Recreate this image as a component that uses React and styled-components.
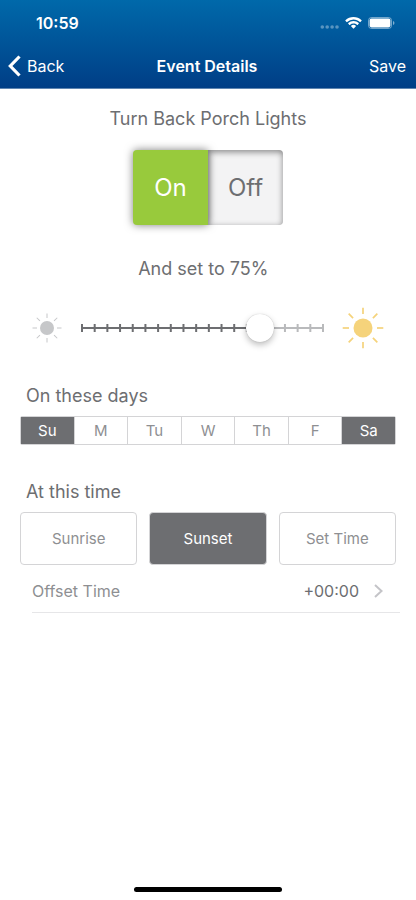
import { useState } from "react";
import styled, { createGlobalStyle } from "styled-components";

const DAYS = ["Su", "M", "Tu", "W", "Th", "F", "Sa"];
const TIMES = ["Sunrise", "Sunset", "Set Time"];
const RAYS = [0, 45, 90, 135, 180, 225, 270, 315];
const MIN = 5;
const STEP = 5;
const TICKS = Array.from({ length: 20 }, (_, i) => MIN + i * STEP);

const position = (value) => `${((value - MIN) / (100 - MIN)) * 100}%`;

const Sun = ({ size, core, inner, outer, stroke, color }) => (
    <svg width={size} height={size} viewBox={`${-size / 2} ${-size / 2} ${size} ${size}`} aria-hidden="true">
        <circle r={core} fill={color}/>
        {RAYS.map((angle) => (
            <line key={angle} x1={inner} x2={outer} y1="0" y2="0" stroke={color} strokeWidth={stroke} transform={`rotate(${angle})`}/>
        ))}
    </svg>
)

const App = () => {
    const [on, setOn] = useState(true);
    const [level, setLevel] = useState(75);
    const [days, setDays] = useState(["Su", "Sa"]);
    const [time, setTime] = useState("Sunset");

    // add or remove a day from the schedule
    const toggleDay = (day) => {
        setDays(days.includes(day) ? days.filter((d) => d !== day) : [...days, day]);
    }

    return (
        <>
        <GlobalStyle/>
        <Screen>
            <TopBar>
                <StatusBar>
                    <Clock>10:59</Clock>
                    <StatusIcons>
                        <svg width="20" height="4" viewBox="0 0 20 4" fill="#fff" fillOpacity="0.35" aria-hidden="true">
                            <circle cx="2.3" cy="2" r="1.8"/>
                            <circle cx="7.2" cy="2" r="1.8"/>
                            <circle cx="12.1" cy="2" r="1.8"/>
                            <circle cx="17" cy="2" r="1.8"/>
                        </svg>
                        <Wifi width="17" height="12" viewBox="0 0 17 12" fill="#fff" aria-hidden="true">
                            <path d="M8.5 2.5c2.4 0 4.7.9 6.4 2.6.1.1.3.1.5 0l1.2-1.3c.1-.1.1-.4 0-.5a11.7 11.7 0 0 0-16.2 0c-.1.1-.1.4 0 .5l1.2 1.3c.2.1.4.1.5 0A9.3 9.3 0 0 1 8.5 2.500z"/>
                            <path d="M8.5 6.500c1.3 0 2.6.5 3.6 1.4.1.1.3.1.5 0l1.2-1.3c.2-.1.2-.4 0-.5a7.8 7.8 0 0 0-10.6 0c-.2.1-.2.4 0 .5l1.2 1.3c.2.1.4.1.5 0a5.3 5.3 0 0 1 3.6-1.4z"/>
                            <path d="M10.9 9.3c.1-.1.1-.4 0-.5a3.7 3.7 0 0 0-4.8 0c-.1.1-.1.4 0 .5l2.1 2.2c.2.2.4.2.6 0z"/>
                        </Wifi>
                        <svg width="27" height="12" viewBox="0 0 27 12" aria-hidden="true">
                            <rect x="0.5" y="0.5" width="23" height="11" rx="3" fill="none" stroke="#fff" strokeOpacity="0.45"/>
                            <rect x="1.6" y="1.6" width="20.8" height="8.8" rx="1.8" fill="#fff"/>
                            <path d="M25 4v4a2.1 2.1 0 0 0 0-4z" fill="#fff" fillOpacity="0.5"/>
                        </svg>
                    </StatusIcons>
                </StatusBar>
                <NavBar>
                    <NavButton>
                        <svg width="13" height="22" viewBox="0 0 13 22" fill="none" stroke="#fff" strokeWidth="3.2" aria-hidden="true">
                            <path d="M11.5 1.5 2.3 11l9.2 9.5"/>
                        </svg>
                        Back
                    </NavButton>
                    <NavTitle>Event Details</NavTitle>
                    <NavButton $end>Save</NavButton>
                </NavBar>
            </TopBar>
            <Content>
                <Heading>Turn Back Porch Lights</Heading>
                <PowerSwitch>
                    <OnButton $active={on} aria-pressed={on} onClick={() => setOn(true)}>On</OnButton>
                    <OffButton $active={!on} aria-pressed={!on} onClick={() => setOn(false)}>Off</OffButton>
                </PowerSwitch>
                <Heading as="label" htmlFor="level">And set to <Level>{level}%</Level></Heading>
                <SliderRow>
                    <Sun size={32} core={7} inner={10} outer={14.5} stroke={1} color="#c6c7c9"/>
                    <Slider>
                        <Scale aria-hidden="true">
                            <line x1={position(level)} x2="100%" y1="14" y2="14" stroke="#b9babc"/>
                            <line x1="0" x2={position(level)} y1="14" y2="14" stroke="#6d6e71"/>
                            {TICKS.map((tick) => (
                                <line key={tick} x1={position(tick)} x2={position(tick)} y1="10" y2="18" stroke={tick <= level ? "#6d6e71" : "#b9babc"}/>
                            ))}
                        </Scale>
                        <Range id="level" type="range" min={MIN} max="100" step={STEP} value={level} onChange={(e) => setLevel(Number(e.target.value))}/>
                    </Slider>
                    <Sun size={42} core={9.5} inner={14} outer={20.3} stroke={1.7} color="#f5d37b"/>
                </SliderRow>
                <SectionTitle>On these days</SectionTitle>
                <Days>
                    {DAYS.map((day) => (
                        <DayButton key={day} $active={days.includes(day)} aria-pressed={days.includes(day)} onClick={() => toggleDay(day)}>{day}</DayButton>
                    ))}
                </Days>
                <SectionTitle>At this time</SectionTitle>
                <Times>
                    {TIMES.map((name) => (
                        <TimeButton key={name} $active={name === time} aria-pressed={name === time} onClick={() => setTime(name)}>{name}</TimeButton>
                    ))}
                </Times>
                <OffsetRow>
                    <span>Offset Time</span>
                    <OffsetValue>
                        +00:00
                        <svg width="9" height="14" viewBox="0 0 9 14" fill="none" stroke="#c4c4c8" strokeWidth="2" aria-hidden="true">
                            <path d="m1 1 6.5 6L1 13"/>
                        </svg>
                    </OffsetValue>
                </OffsetRow>
            </Content>
            <HomeIndicator/>
        </Screen>
        </>
    )
}

export default App;

// Styled Components
const GlobalStyle = createGlobalStyle`
    *, *::before, *::after {
        box-sizing: border-box;
    }
    body {
        margin: 0;
        background-color: #fff;
        font-family: "Inter", "Liberation Sans", sans-serif;
        color: #6d6e71;
    }
    button {
        margin: 0;
        padding: 0;
        border: none;
        background: none;
        font: inherit;
        color: inherit;
        cursor: pointer;
    }
    svg {
        flex-shrink: 0;
    }
`;

const Screen = styled.div`
    display: flex;
    flex-direction: column;
    min-height: 100vh;
`;

const TopBar = styled.header`
    display: flex;
    flex-direction: column;
    border-bottom: 1px solid #5f85b1;
    background: linear-gradient(#0069aa, #003e86);
    color: #fff;
`;

const StatusBar = styled.div`
    display: flex;
    align-items: center;
    justify-content: space-between;
    height: 44px;
    padding: 2px 21px 0 36px;
`;

const Clock = styled.span`
    font-size: 16px;
    font-weight: 600;
`;

const StatusIcons = styled.div`
    display: flex;
    align-items: center;
    gap: 5px;

    svg:first-child {
        margin-top: 8px;
    }
`;

const Wifi = styled.svg`
    margin-right: 1px;
`;

const NavBar = styled.nav`
    display: grid;
    grid-template-columns: 1fr auto 1fr;
    align-items: center;
    height: 44px;
    padding: 0 10px 0 8px;
`;

const NavButton = styled.button`
    display: flex;
    align-items: center;
    justify-self: ${(props) => (props.$end ? "end" : "start")};
    gap: 6px;
    font-size: 16px;
`;

const NavTitle = styled.h1`
    margin: 0;
    font-size: 16px;
    font-weight: 600;
`;

const Content = styled.main`
    display: flex;
    flex-direction: column;
    flex: 1;
    padding: 18px 20px 0;
`;

const Heading = styled.h2`
    margin: 0;
    font-size: 18px;
    font-weight: 400;
    line-height: 24px;
    text-align: center;
`;

// wide enough for three digits, so the label stays put while sliding
const Level = styled.span`
    display: inline-block;
    min-width: 48px;
    text-align: left;
`;

const PowerSwitch = styled.div`
    display: flex;
    align-self: center;
    margin: 19px 0 32px;
`;

const PowerButton = styled.button`
    width: 75px;
    height: 75px;
    font-size: 24px;
    color: ${(props) => (props.$active ? "#fff" : "#6d6e71")};
    background-color: ${(props) => (props.$active ? "#98ca3c" : "#f3f3f4")};
    box-shadow: ${(props) => (props.$active ? "0 0 8px rgba(0, 0, 0, 0.5)" : "inset 0 2px 6px rgba(0, 0, 0, 0.45)")};
    z-index: ${(props) => (props.$active ? 1 : 0)};
`;

const OnButton = styled(PowerButton)`
    border-radius: 4px 0 0 4px;
`;

const OffButton = styled(PowerButton)`
    border-radius: 0 4px 4px 0;
`;

const SliderRow = styled.div`
    display: flex;
    align-items: center;
    gap: 5px;
    margin: 26px 0 35px;
    padding: 0 12px 0 11px;
`;

const Slider = styled.div`
    display: grid;
    flex: 1;
    height: 28px;

    > * {
        grid-area: 1 / 1;
    }
`;

const Scale = styled.svg`
    width: calc(100% - 28px);
    height: 28px;
    margin: 0 14px;
    overflow: visible;
    stroke-width: 2px;
`;

const Range = styled.input`
    appearance: none;
    width: 100%;
    height: 28px;
    margin: 0;
    background: transparent;
    cursor: pointer;

    &::-webkit-slider-thumb {
        appearance: none;
        width: 28px;
        height: 28px;
        border-radius: 50%;
        background-color: #fff;
        box-shadow: 0 3px 6px rgba(0, 0, 0, 0.25), 0 0 1px rgba(0, 0, 0, 0.25);
    }
`;

const SectionTitle = styled.h2`
    margin: 0 0 8px 6px;
    font-size: 18px;
    font-weight: 400;
    line-height: 24px;
`;

const Days = styled.div`
    display: flex;
    height: 29px;
    margin-bottom: 35px;
    border: 1px solid #d4d4d6;
    border-radius: 2px;
`;

const DayButton = styled.button`
    flex: 1;
    font-size: 15px;
    color: ${(props) => (props.$active ? "#fff" : "#8e8f92")};
    background-color: ${(props) => (props.$active ? "#6d6e71" : "#fff")};

    & + & {
        border-left: 1px solid #d4d4d6;
    }
`;

const Times = styled.div`
    display: grid;
    grid-template-columns: repeat(3, 1fr);
    gap: 12px;
`;

const TimeButton = styled.button`
    height: 53px;
    border: 1px solid #d4d4d6;
    border-radius: 4px;
    font-size: 15px;
    color: ${(props) => (props.$active ? "#fff" : "#8e8f92")};
    background-color: ${(props) => (props.$active ? "#6d6e71" : "#fff")};
`;

const OffsetRow = styled.button`
    display: flex;
    align-items: center;
    justify-content: space-between;
    height: 48px;
    margin: 0 -4px 0 12px;
    padding: 4px 17px 0 0;
    border-bottom: 1px solid #e6e6e8;
    font-size: 16px;
    color: #8e8f92;
`;

const OffsetValue = styled.span`
    display: flex;
    align-items: center;
    gap: 15px;
    color: #6d6e71;
`;

const HomeIndicator = styled.div`
    align-self: center;
    width: 148px;
    height: 5px;
    margin: 8px 0;
    border-radius: 3px;
    background-color: #000;
`;
